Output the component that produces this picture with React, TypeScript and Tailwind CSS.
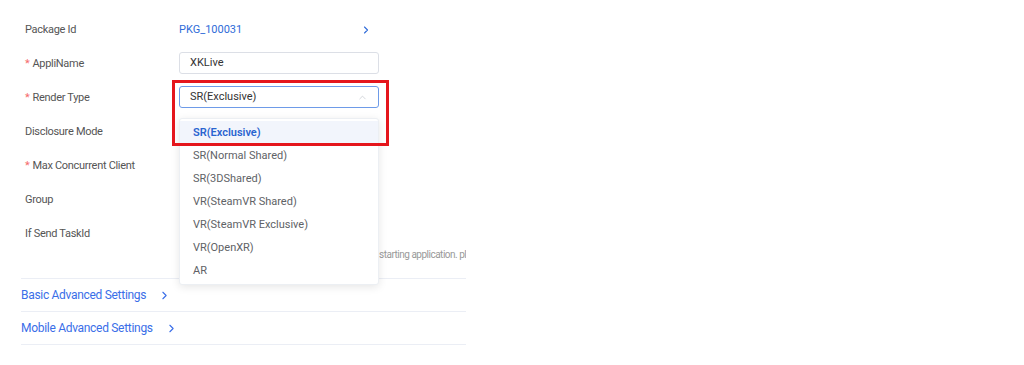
import { ChevronRight, ChevronUp } from "lucide-react";

const options = [
  "SR(Exclusive)",
  "SR(Normal Shared)",
  "SR(3DShared)",
  "VR(SteamVR Shared)",
  "VR(SteamVR Exclusive)",
  "VR(OpenXR)",
  "AR",
];

type rowProps = {
  label: string;
  required?: boolean;
  children?: React.ReactNode;
};

const Row = ({ label, required, children }: rowProps) => (
  <div className="flex h-[34px] items-center">
    <div className="w-[158px] pl-[4px] pt-[2px] text-[11px] tracking-[-0.3px] text-[#555]">
      {required && <span className="mr-[3px] text-[#f56c6c]">*</span>}
      {label}
    </div>
    <div className="relative w-[200px]">{children}</div>
  </div>
);

const App = () => {
  return (
    <main
      className="h-[365px] w-[1024px] bg-white pl-[21px] pt-[12px]"
      style={{ fontFamily: 'Roboto, "Liberation Sans", sans-serif' }}
    >
      <div className="relative w-[445px] overflow-hidden">
        <Row label="Package Id">
          <div className="flex items-center justify-between pt-[2px]">
            <span className="text-[11px] text-[#2f6bd8]">PKG_100031</span>
            <ChevronRight className="mr-[7px] h-[12px] w-[12px] text-[#2f6bd8]" strokeWidth={2.2} />
          </div>
        </Row>
        <Row label="AppliName" required>
          <div className="flex h-[22px] items-center rounded-[3px] border border-[#dcdfe6] px-[10px] pt-[1px] text-[11px] text-[#333]">
            XKLive
          </div>
        </Row>
        <Row label="Render Type" required>
          <div className="flex h-[22px] items-center justify-between rounded-[3px] border border-[#6e9be8] px-[10px] pt-[1px] text-[11px] text-[#333]">
            SR(Exclusive)
            <ChevronUp className="h-[11px] w-[11px] text-[#c0c4cc]" strokeWidth={1.5} />
          </div>
        </Row>
        <Row label="Disclosure Mode" />
        <Row label="Max Concurrent Client" required />
        <Row label="Group" />
        <div className="h-[46px]">
          <Row label="If Send TaskId" />
          <div className="-mt-[3px] ml-[186px] whitespace-nowrap text-[10px] tracking-[-0.5px] text-[#999]">
            After enabled, the TaskId is passed in when starting application. please check the docs
          </div>
        </div>
        <div className="mt-[16px] border-t border-[#ebeef5]">
          <div className="flex h-[32px] items-center gap-[12px] text-[12px] tracking-[-0.3px] text-[#3a6ee8]">
            Basic Advanced Settings
            <ChevronRight className="h-[13px] w-[13px]" strokeWidth={2} />
          </div>
        </div>
        <div className="border-t border-[#ebeef5]">
          <div className="flex h-[32px] items-center gap-[12px] text-[12px] tracking-[-0.3px] text-[#3a6ee8]">
            Mobile Advanced Settings
            <ChevronRight className="h-[13px] w-[13px]" strokeWidth={2} />
          </div>
        </div>
        <div className="border-t border-[#ebeef5]" />

        <div className="absolute left-[158px] top-[100px] w-[200px]">
          <div className="ml-[23px] h-0 w-0 border-x-[6px] border-b-[6px] border-x-transparent border-b-white" />
          <div className="rounded-[3px] border border-[#eceff3] bg-white py-[2px] shadow-[0_2px_8px_rgba(0,0,0,0.1)]">
            {options.map((opt, idx) => (
              <div
                key={idx}
                className={`flex h-[23px] items-center px-[13px] pt-[1px] text-[11px] ${
                  idx === 0 ? "bg-[#f2f5fc] font-semibold text-[#2a64d0]" : "text-[#606266]"
                }`}
              >
                {opt}
              </div>
            ))}
          </div>
        </div>
      </div>

      <div className="pointer-events-none absolute left-[172px] top-[80px] h-[66px] w-[217px] border-[3px] border-[#e5161c]" />
    </main>
  );
};

export default App;
